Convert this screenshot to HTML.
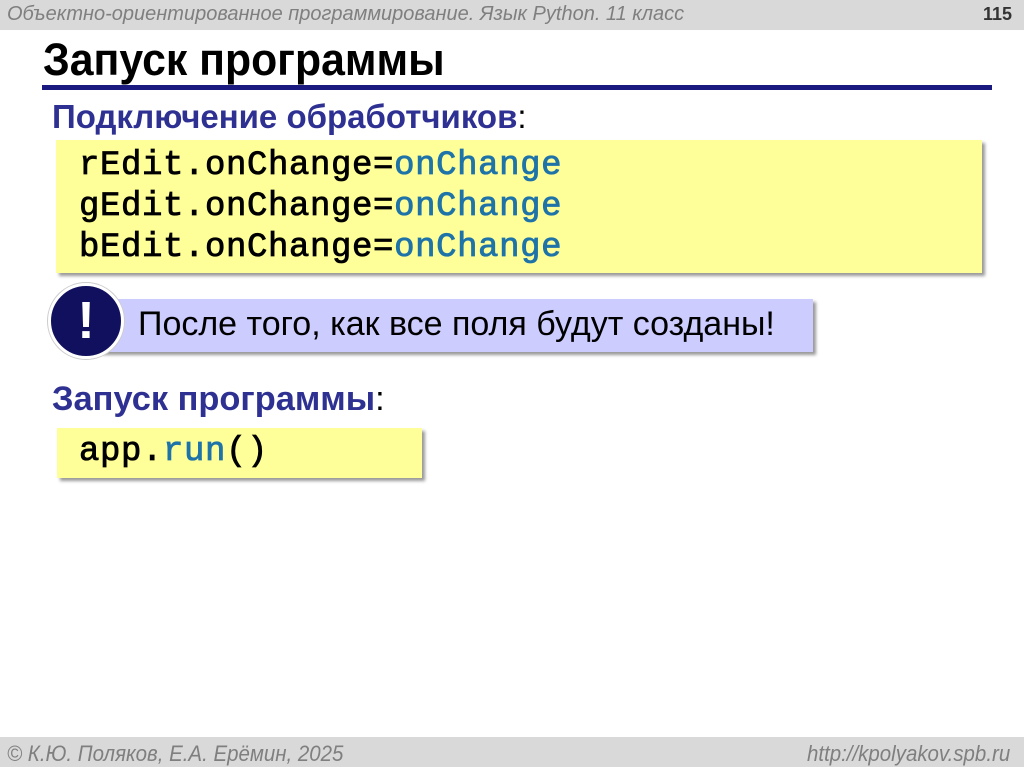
<!DOCTYPE html>
<html><head><meta charset="utf-8"><style>
body{margin:0;width:1024px;height:767px;background:#fff;position:relative;overflow:hidden;font-family:"Liberation Sans",sans-serif}
.a{position:absolute;white-space:nowrap}
.hdr{left:0;top:0;width:1024px;height:30px;background:#d9d9d9}
.ftr{left:0;top:737px;width:1024px;height:30px;background:#d9d9d9}
.gi{font-style:italic;color:#7f7f7f;font-size:20px;transform:scaleX(.93);transform-origin:left}
.code{font-family:"Liberation Mono",monospace;font-weight:normal;-webkit-text-stroke:.8px #000;font-size:34px;letter-spacing:.6px;color:#000}
.c{color:#1e73a8;-webkit-text-stroke:.8px #1e73a8}
.yb{background:#ffff99;box-shadow:3px 3px 3px #999}
.h2{font-weight:bold;font-size:32px;color:#2e3192}
</style></head><body>
<div class="a hdr"></div>
<div class="a gi" style="left:7px;top:3px;transform:scaleX(1)">Объектно-ориентированное программирование. Язык Python. 11 класс</div>
<div class="a" style="left:983px;top:4px;font-weight:bold;font-size:18px;color:#333">115</div>
<div class="a" style="left:43px;top:34px;font-weight:bold;font-size:45px;color:#000;transform:scaleX(.95);transform-origin:left">Запуск программы</div>
<div class="a" style="left:42px;top:85px;width:950px;height:5px;background:#1a1a80"></div>
<div class="a h2" style="left:52px;top:98px;font-size:33px;transform:scaleX(1);transform-origin:left">Подключение обработчиков<span style="font-weight:normal;color:#000">:</span></div>
<div class="a yb" style="left:56px;top:140px;width:926px;height:133px"></div>
<div class="a code" style="left:79px;top:146px;line-height:41px">rEdit.onChange=<span class="c">onChange</span><br>gEdit.onChange=<span class="c">onChange</span><br>bEdit.onChange=<span class="c">onChange</span></div>
<div class="a" style="left:100px;top:299px;width:713px;height:53px;background:#ccccff;box-shadow:3px 3px 3px #999"></div>
<div class="a" style="left:48px;top:283px;width:70px;height:70px;border-radius:50%;background:#10105e;border:3px solid #fff;box-shadow:0 0 0 1px #ccc;color:#fff;font-weight:bold;font-size:52px;text-align:center;line-height:70px">!</div>
<div class="a" style="left:138px;top:305px;font-size:34px;color:#000">После того, как все поля будут созданы!</div>
<div class="a h2" style="left:52px;top:380px;font-size:34.4px">Запуск программы<span style="font-weight:normal;color:#000">:</span></div>
<div class="a yb" style="left:57px;top:428px;width:365px;height:50px"></div>
<div class="a code" style="left:79px;top:432px;line-height:41px">app.<span class="c">run</span>()</div>
<div class="a ftr"></div>
<div class="a gi" style="left:7px;top:741px;font-size:22px">© К.Ю. Поляков, Е.А. Ерёмин, 2025</div>
<div class="a gi" style="left:807px;top:741px;font-size:22px">http://kpolyakov.spb.ru</div>
</body></html>
